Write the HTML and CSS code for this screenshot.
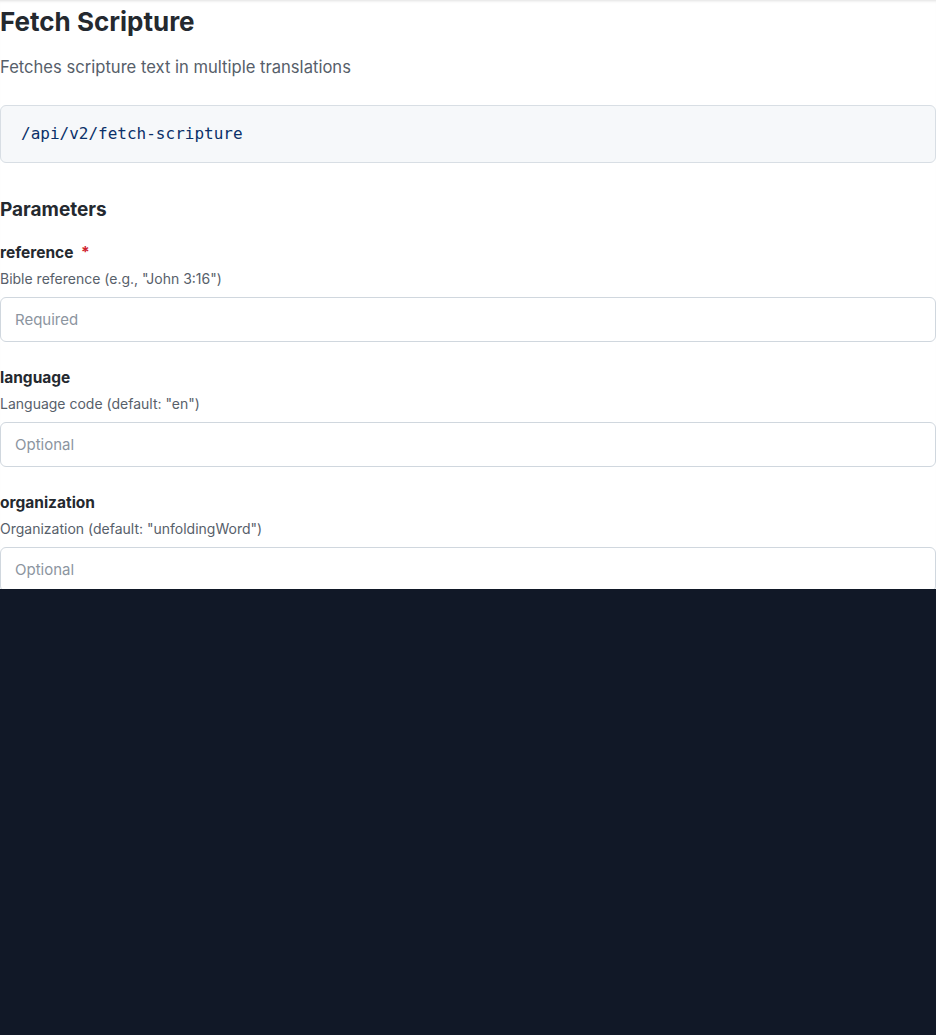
FILE: index.html
```html
<!DOCTYPE html>
<html lang="en">
<head>
<meta charset="utf-8">
<title>Fetch Scripture</title>
<link rel="stylesheet" href="styles.css">
</head>
<body>
<main class="panel">
  <h1 class="title">Fetch Scripture</h1>
  <p class="subtitle">Fetches scripture text in multiple translations</p>
  <div class="endpoint"><code>/api/v2/fetch-scripture</code></div>
  <h2 class="section">Parameters</h2>
  <div class="params">
    <div class="param">
      <label class="param-name" for="p-reference">reference <span class="req">*</span></label>
      <div class="param-desc">Bible reference (e.g., "John 3:16")</div>
      <input class="param-input" id="p-reference" type="text" placeholder="Required">
    </div>
    <div class="param">
      <label class="param-name" for="p-language">language</label>
      <div class="param-desc">Language code (default: "en")</div>
      <input class="param-input" id="p-language" type="text" placeholder="Optional">
    </div>
    <div class="param">
      <label class="param-name" for="p-organization">organization</label>
      <div class="param-desc">Organization (default: "unfoldingWord")</div>
      <input class="param-input" id="p-organization" type="text" placeholder="Optional">
    </div>
  </div>
</main>
</body>
</html>
```
FILE: styles.css
```css
html, body {
  margin: 0;
  padding: 0;
  background: #111827;
  height: 100%;
}
body {
  font-family: Inter, "Liberation Sans", Arial, sans-serif;
  color: #24292f;
}
.panel {
  background: #ffffff;
  height: 589px;
  overflow: hidden;
  box-shadow: inset 0 3px 3px -2px rgba(0, 0, 0, 0.12);
  box-sizing: border-box;
  padding-top: 5px;
}
.title {
  margin: 0;
  font-size: 26px;
  line-height: 33px;
  font-weight: 700;
  color: #24292f;
}
.subtitle {
  margin: 17px 0 0;
  font-size: 16.6px;
  line-height: 24px;
  color: #57606a;
}
.endpoint {
  margin-top: 26px;
  background: #f6f8fa;
  border: 1px solid #d8dee4;
  border-radius: 6px;
  padding: 16px 20px;
}
.endpoint code {
  font-family: "DejaVu Sans Mono", "Liberation Mono", monospace;
  font-size: 16px;
  line-height: 24px;
  color: #0a3069;
  display: block;
}
.section {
  margin: 32px 0 0;
  font-size: 19px;
  line-height: 30px;
  font-weight: 700;
  color: #24292f;
}
.params {
  margin-top: 16px;
  display: flex;
  flex-direction: column;
  gap: 24px;
}
.param {
  display: flex;
  flex-direction: column;
}
.param-name {
  font-size: 15.5px;
  line-height: 24px;
  font-weight: 700;
  color: #24292f;
}
.req {
  color: #cf222e;
  margin-left: 4px;
}
.param-desc {
  margin-top: 3px;
  font-size: 14px;
  line-height: 21px;
  color: #57606a;
}
.param-input {
  margin-top: 8px;
  height: 45px;
  box-sizing: border-box;
  border: 1px solid #d0d7de;
  border-radius: 6px;
  padding: 0 14px;
  font-family: Inter, "Liberation Sans", Arial, sans-serif;
  font-size: 15px;
  color: #24292f;
  background: #ffffff;
  outline: none;
}
.param-input::placeholder {
  color: #8c959f;
}
```
